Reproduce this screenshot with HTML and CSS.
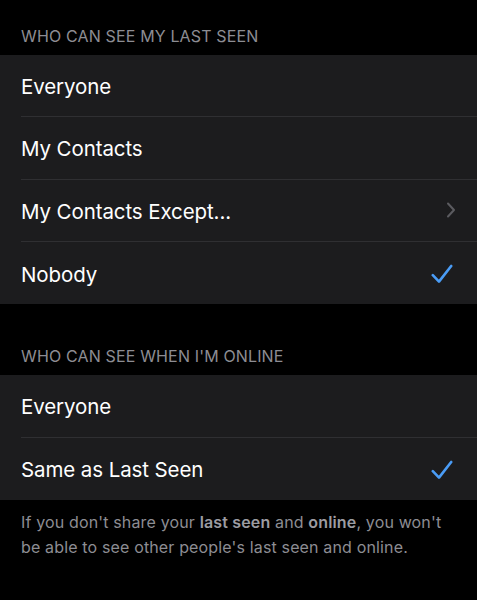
FILE: index.html
```html
<!DOCTYPE html>
<html>
<head>
<meta charset="utf-8">
<link rel="stylesheet" href="styles.css">
</head>
<body>
<div class="page">
  <div class="section-header first">WHO CAN SEE MY LAST SEEN</div>
  <div class="group">
    <div class="row"><div class="row-inner"><span class="label">Everyone</span></div></div>
    <div class="row"><div class="row-inner"><span class="label">My Contacts</span></div></div>
    <div class="row"><div class="row-inner"><span class="label">My Contacts Except...</span>
      <svg class="chevron" width="10" height="16" viewBox="0 0 10 16"><path d="M2 1.5 L8 8 L2 14.5" fill="none" stroke="#5b5b60" stroke-width="2" stroke-linecap="round" stroke-linejoin="round"/></svg>
    </div></div>
    <div class="row"><div class="row-inner last"><span class="label">Nobody</span>
      <svg class="check" width="22" height="20" viewBox="0 0 22 20"><path d="M1.8 11.2 L8 17.6 L20.2 2" fill="none" stroke="#4a9cf6" stroke-width="2.6" stroke-linecap="round" stroke-linejoin="round"/></svg>
    </div></div>
  </div>
  <div class="section-header second">WHO CAN SEE WHEN I'M ONLINE</div>
  <div class="group">
    <div class="row"><div class="row-inner"><span class="label">Everyone</span></div></div>
    <div class="row"><div class="row-inner last"><span class="label">Same as Last Seen</span>
      <svg class="check" width="22" height="20" viewBox="0 0 22 20"><path d="M1.8 11.2 L8 17.6 L20.2 2" fill="none" stroke="#4a9cf6" stroke-width="2.6" stroke-linecap="round" stroke-linejoin="round"/></svg>
    </div></div>
  </div>
  <p class="footer">If you don't share your <b>last seen</b> and <b>online</b>, you won't be able to see other people's last seen and online.</p>
</div>
</body>
</html>
```
FILE: styles.css
```css
html, body {
  margin: 0;
  padding: 0;
  background: #000;
}
.page {
  width: 477px;
  font-family: Inter, "Noto Sans", sans-serif;
  color: #fff;
}
.section-header {
  box-sizing: border-box;
  padding: 0 21px 9px;
  display: flex;
  align-items: flex-end;
  font-size: 16px;
  line-height: 20px;
  color: #8d8d93;
  letter-spacing: 0.15px;
}
.section-header.first { height: 55px; }
.section-header.second { height: 71px; }
.group {
  background: #1c1c1e;
}
.row {
  padding-left: 21px;
}
.row-inner {
  box-sizing: border-box;
  height: 62.33px;
  display: flex;
  align-items: center;
  justify-content: space-between;
  padding-right: 24px;
  border-bottom: 1px solid #2f2f32;
}
.row-inner.last {
  border-bottom: none;
}
.label {
  font-size: 20.5px;
  letter-spacing: -0.1px;
  padding-top: 2px;
}
.chevron {
  margin-right: -3px;
}
.check {
  margin-top: 2px;
}
.footer {
  margin: 0;
  padding: 10px 30px 0 21px;
  font-size: 16px;
  line-height: 25px;
  color: #8d8d93;
  letter-spacing: 0.15px;
}
.footer b {
  font-weight: 600;
  color: #9c9ca2;
}
```
